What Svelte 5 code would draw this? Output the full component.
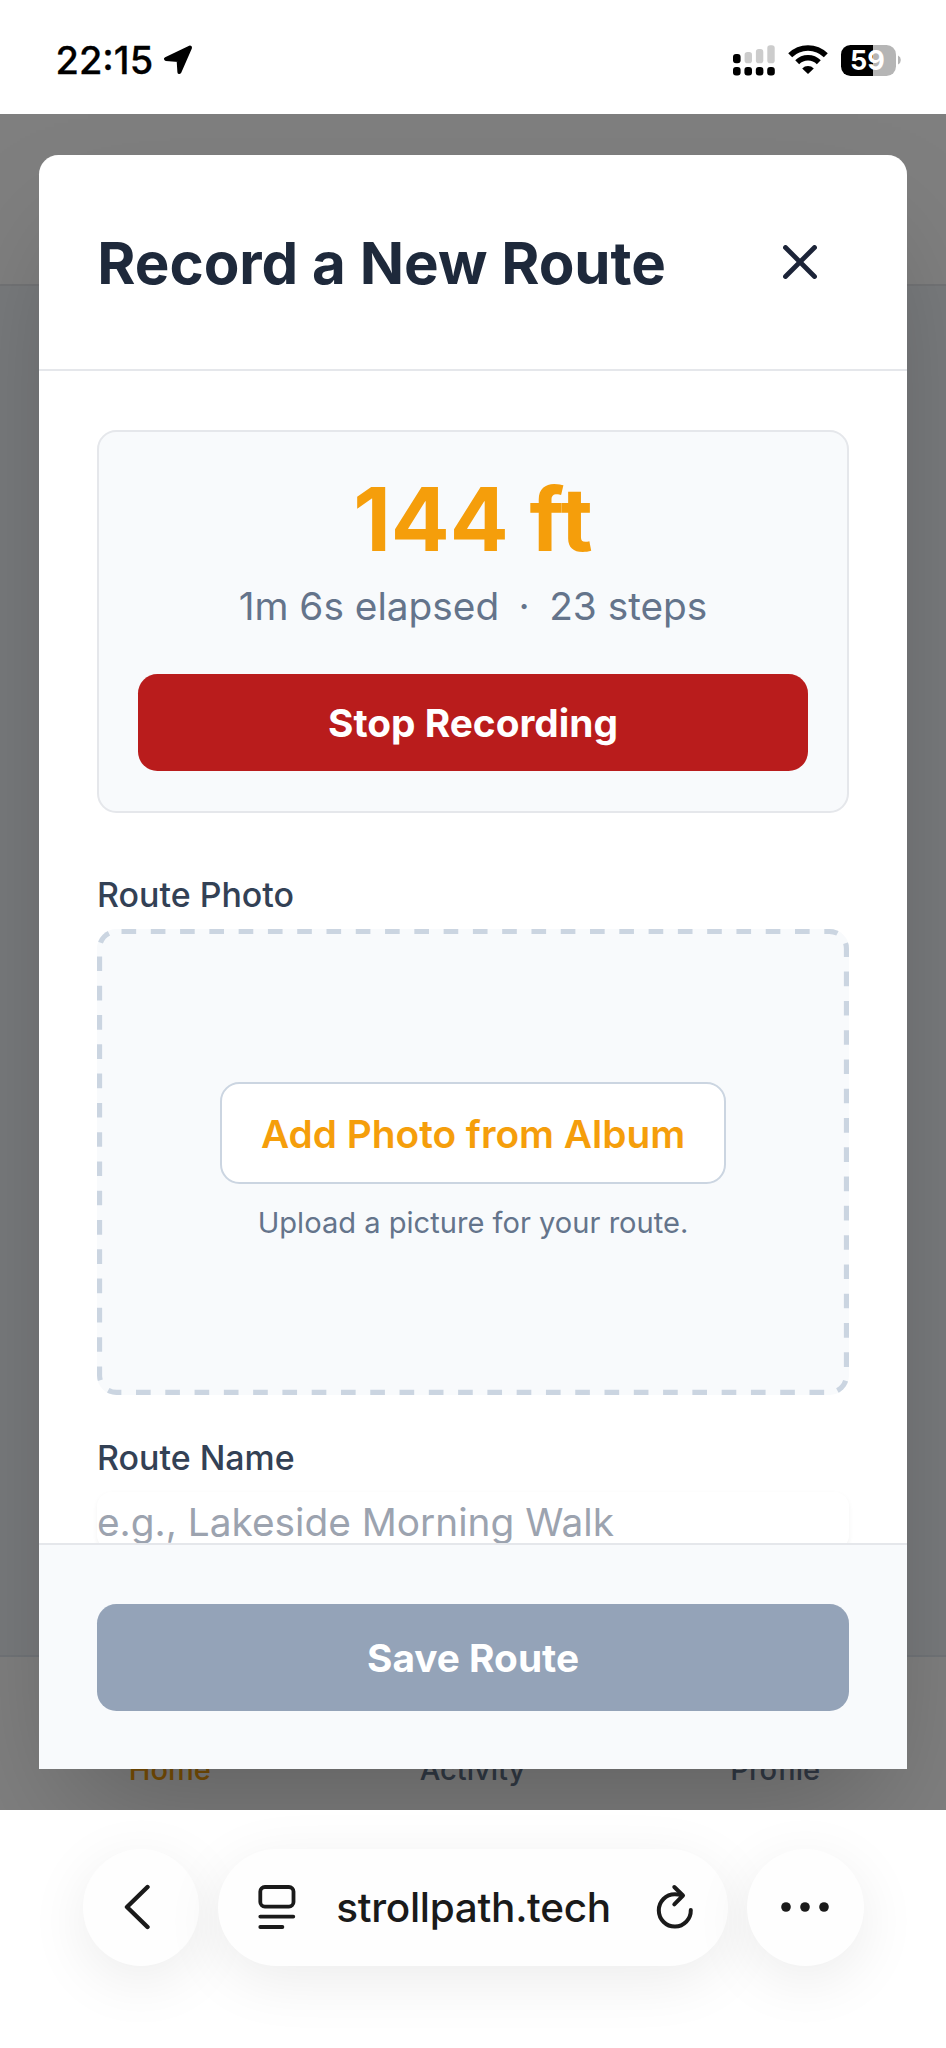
<script>
  const tabs = [
    { label: 'Home', active: true },
    { label: 'Activity', active: false },
    { label: 'Profile', active: false }
  ];
  let routeName = $state('');
</script>

<div class="screen">
  <header class="status">
    <div class="clock">
      <span class="time">22:15</span>
      <svg width="30" height="30" viewBox="0 0 30 30">
        <path d="M27 2.6 3 14l12.6.9L16.4 27Z" fill="#000" stroke="#000" stroke-width="4" stroke-linejoin="round" />
      </svg>
    </div>
    <div class="indicators">
      <svg class="signal" width="42" height="32" viewBox="0 0 42 32">
        <g fill="#000">
          <rect x="0" y="10" width="7.6" height="9.2" rx="3" />
          <rect x="0" y="23" width="7.6" height="8.4" rx="3" />
          <rect x="11.4" y="23" width="7.6" height="8.4" rx="3" />
          <rect x="22.8" y="23" width="7.6" height="8.4" rx="3" />
          <rect x="34.2" y="23" width="7.6" height="8.4" rx="3" />
        </g>
        <g fill="#ccc">
          <rect x="11.6" y="8" width="7.4" height="11.2" rx="2.8" />
          <rect x="22.9" y="5" width="7.4" height="14.2" rx="2.8" />
          <rect x="34.3" y="1.2" width="7.4" height="18" rx="2.8" />
        </g>
      </svg>
      <svg class="wifi" width="40" height="30" viewBox="0 0 40 30">
        <g fill="none" stroke="#000" stroke-width="5.6">
          <path d="M2.2 10.3a25.3 25.3 0 0 1 35.6 0" />
          <path d="M9.2 17.2a15.4 15.4 0 0 1 21.6 0" />
        </g>
        <path d="M20 29 14.2 23.4a8.3 8.3 0 0 1 11.6 0Z" fill="#000" />
      </svg>
      <div class="battery">
        <span>59</span>
      </div>
      <svg class="nub" width="4" height="10" viewBox="0 0 4 10"><path d="M0 0.5a5 5 0 0 1 0 9Z" fill="#b5b5b5" /></svg>
    </div>
  </header>

  <main class="viewport">
    <div class="page">
      <div class="page-top"></div>
      <div class="page-body"></div>
      <nav class="tabs">
        {#each tabs as tab}
          <span class:active={tab.active}>{tab.label}</span>
        {/each}
      </nav>
    </div>

    <div class="overlay">
      <section class="modal">
        <header class="modal-head">
          <h2>Record a New Route</h2>
          <button class="close" aria-label="Close">
            <svg width="34" height="34" viewBox="0 0 34 34">
              <path d="M2.5 2.5 31.5 31.5M31.5 2.5 2.5 31.5" stroke="#1c2438" stroke-width="4.8" stroke-linecap="round" />
            </svg>
          </button>
        </header>

        <div class="modal-body">
          <div class="tracker">
            <div class="distance">144 ft</div>
            <div class="stats">1m 6s elapsed<span class="dot">·</span>23 steps</div>
            <button class="stop">Stop Recording</button>
          </div>

          <div class="field">
            <div class="label">Route Photo</div>
            <div class="dropzone">
              <svg class="dashes" width="752" height="466" viewBox="0 0 752 466">
                <rect x="0" y="0" width="752" height="466" rx="19.4" fill="none" stroke="#cbd5e1" stroke-width="9.8" stroke-dasharray="14.65 14.65" stroke-dashoffset="-4.9" />
              </svg>
              <button class="album">Add Photo from Album</button>
              <p>Upload a picture for your route.</p>
            </div>
          </div>

          <div class="field name">
            <label class="label" for="route-name">Route Name</label>
            <input id="route-name" placeholder="e.g., Lakeside Morning Walk" bind:value={routeName} />
          </div>
        </div>

        <footer class="modal-foot">
          <button class="save">Save Route</button>
        </footer>
      </section>
    </div>
  </main>

  <footer class="browser">
    <div class="round back">
      <svg width="26" height="46" viewBox="0 0 26 46">
        <path d="M23.5 3 3 23 23.5 43" fill="none" stroke="#1a1a1a" stroke-width="4.4" stroke-linecap="round" stroke-linejoin="round" />
      </svg>
    </div>
    <div class="address">
      <svg width="38" height="44" viewBox="0 0 38 44" fill="none" stroke="#1a1a1a" stroke-width="3.8" stroke-linecap="round">
        <rect x="2.3" y="2" width="33.2" height="19.6" rx="4.6" />
        <path d="M2.3 31.6H35.3M2.3 42H24.4" />
      </svg>
      <span class="url">strollpath.tech</span>
      <svg width="38" height="46" viewBox="0 0 38 46" fill="none" stroke="#1a1a1a" stroke-width="4" stroke-linecap="round" stroke-linejoin="round">
        <path d="M34.8 26A16 16.2 0 1 1 18.8 10.2q4 0 7 1.3" />
        <path d="M18.3 3 27 11.5 18.3 20.3" />
      </svg>
    </div>
    <div class="round">
      <svg width="50" height="12" viewBox="0 0 50 12" fill="#1a1a1a">
        <circle cx="6" cy="6" r="4.8" /><circle cx="25" cy="6" r="4.8" /><circle cx="44" cy="6" r="4.8" />
      </svg>
    </div>
  </footer>
</div>

<style>
  :global(html) {
    font-size: 38.81px;
  }
  :global(body) {
    margin: 0;
    background: #fff;
  }
  * {
    box-sizing: border-box;
  }
  .screen {
    width: 946px;
    height: 2048px;
    display: flex;
    flex-direction: column;
    overflow: hidden;
    background: #fff;
    font-family: Inter, sans-serif;
  }
  svg {
    display: block;
    flex: none;
  }
  button {
    font: inherit;
    border: 0;
    padding: 0;
    background: none;
  }

  .status {
    height: 114px;
    flex: none;
    padding: 6px 44px 0 55.5px;
    display: flex;
    align-items: center;
    justify-content: space-between;
  }
  .clock {
    display: flex;
    align-items: center;
    gap: 9px;
  }
  .time {
    width: 98.5px;
    font-size: 38px;
    font-weight: 500;
    line-height: 46px;
    white-space: nowrap;
    -webkit-text-stroke: 0.3px #000;
  }
  .indicators {
    display: flex;
    align-items: center;
  }
  .wifi {
    margin-left: 13px;
  }
  .battery {
    width: 55px;
    height: 31px;
    margin-left: 13px;
    border-radius: 9.5px;
    background: linear-gradient(90deg, #000 59%, #b5b5b5 59%);
    color: #fff;
    display: flex;
    align-items: center;
    justify-content: center;
    padding-right: 2px;
    font-size: 27px;
    font-weight: 700;
    line-height: 31px;
  }
  .nub {
    margin-left: 2px;
  }

  .viewport {
    height: 1696px;
    flex: none;
    display: grid;
    overflow: hidden;
  }
  .page,
  .overlay {
    grid-area: 1 / 1;
    min-width: 0;
    min-height: 0;
  }
  .page {
    display: flex;
    flex-direction: column;
    background: #f1f5f9;
  }
  .page-top {
    height: 172px;
    background: #fff;
    border-bottom: 2px solid #e5e7eb;
  }
  .page-body {
    flex: 1;
  }
  .tabs {
    height: 155px;
    display: grid;
    grid-template-columns: repeat(3, 1fr);
    align-items: end;
    justify-items: center;
    padding: 0 19.5px 20px 18.5px;
    background: #fff;
    border-top: 2px solid #e2e8f0;
    color: #64748b;
    font-size: 0.75rem;
    font-weight: 500;
    line-height: 1rem;
  }
  .tabs .active {
    color: #f59e0b;
  }
  .overlay {
    background: rgba(0, 0, 0, 0.5);
    padding: 41px 39px;
    display: flex;
    z-index: 1;
  }
  .modal {
    flex: 1;
    min-width: 0;
    height: 1613.5px;
    display: flex;
    flex-direction: column;
    background: #fff;
    border-radius: 0.5rem 0.5rem 0 0;
    box-shadow: 0 61px 121px -29px rgba(0, 0, 0, 0.25);
  }
  .modal-head {
    height: 216px;
    flex: none;
    padding: 0 1.5rem;
    display: flex;
    align-items: center;
    justify-content: space-between;
    border-bottom: 2px solid #e5e7eb;
  }
  h2 {
    margin: 3px 0 0;
    font-size: 1.5rem;
    font-weight: 700;
    line-height: 2rem;
    color: #1e293b;
    white-space: nowrap;
  }
  .close {
    width: 2.5rem;
    height: 2.5rem;
    display: grid;
    place-items: center;
  }
  .modal-body {
    flex: 1;
    min-height: 0;
    overflow: hidden;
    padding: 59px 58px 0;
  }
  .tracker {
    height: 383px;
    padding: 39px 39px 0;
    display: flex;
    flex-direction: column;
    background: #f8fafc;
    border: 2px solid #e5e7eb;
    border-radius: 0.5rem;
    text-align: center;
  }
  .distance {
    font-size: 2.25rem;
    line-height: 2.5rem;
    font-weight: 700;
    color: #f59e0b;
    white-space: nowrap;
  }
  .stats {
    margin-top: 9.4px;
    font-size: 1rem;
    line-height: 1.5rem;
    color: #64748b;
    white-space: nowrap;
  }
  .dot {
    margin: 0 19.4px;
  }
  .stop {
    margin-top: 1rem;
    height: 2.5rem;
    border-radius: 0.5rem;
    background: #b91c1c;
    color: #fff;
    font-size: 1rem;
    font-weight: 700;
  }
  .field {
    margin-top: 1.5rem;
  }
  .field.name {
    margin-top: 1rem;
  }
  .label {
    display: block;
    margin-bottom: 0.25rem;
    font-size: 0.875rem;
    line-height: 1.25rem;
    font-weight: 500;
    color: #334155;
  }
  .dropzone {
    position: relative;
    height: 12rem;
    display: flex;
    flex-direction: column;
    align-items: center;
    justify-content: center;
    background: #f8fafc;
    border-radius: 0.5rem;
    overflow: hidden;
  }
  .dashes {
    position: absolute;
    inset: 0;
    width: 100%;
    height: 100%;
  }
  .album {
    height: 102px;
    padding: 0 1rem;
    border: 2px solid #cbd5e1;
    border-radius: 0.5rem;
    background: #fff;
    color: #f59e0b;
    font-size: 1rem;
    font-weight: 600;
    white-space: nowrap;
  }
  .dropzone p {
    margin: 0.5rem 0 0;
    font-size: 0.75rem;
    line-height: 1rem;
    color: #64748b;
    white-space: nowrap;
  }
  input {
    display: block;
    width: 100%;
    height: 58px;
    padding: 0;
    border: 0;
    border-radius: 0.375rem;
    box-shadow: 0 2.4px 4.8px rgba(0, 0, 0, 0.05);
    font: inherit;
    font-size: 1rem;
    background: #fff;
  }
  input::placeholder {
    color: #9ca3af;
    opacity: 1;
  }
  .modal-foot {
    flex: none;
    height: 225.5px;
    padding: 59px 58px;
    background: #f8fafc;
    border-top: 2px solid #e5e7eb;
  }
  .save {
    display: block;
    width: 100%;
    height: 2.75rem;
    border-radius: 0.5rem;
    background: #94a3b8;
    color: #fff;
    font-size: 1rem;
    font-weight: 700;
  }

  .browser {
    flex: 1;
    padding: 39px 82.5px 0;
    display: flex;
    align-items: flex-start;
    gap: 18.6px;
    background: #fff;
    overflow: hidden;
  }
  .round,
  .address {
    height: 116.5px;
    border-radius: 59px;
    background: #fefefe;
    box-shadow: 0 14px 60px rgba(0, 0, 0, 0.08);
    display: flex;
    align-items: center;
  }
  .round {
    width: 116.5px;
    flex: none;
    justify-content: center;
    padding-right: 1px;
  }
  .round.back {
    padding-right: 8px;
  }
  .address {
    flex: 1;
    min-width: 0;
    padding: 0 34px 0 40px;
    justify-content: space-between;
  }
  .url {
    margin: 2px 5px 0 0;
    font-size: 40.5px;
    font-weight: 500;
    line-height: 50px;
    letter-spacing: -0.3px;
    color: #1a1a1a;
    white-space: nowrap;
  }
</style>
